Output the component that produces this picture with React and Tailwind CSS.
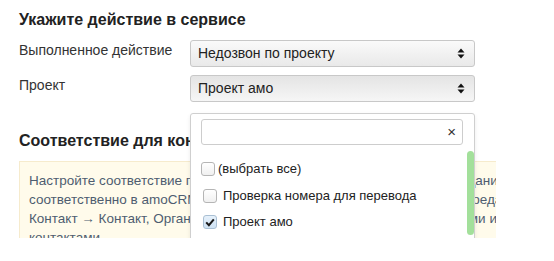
import React from "react";

const font = { fontFamily: '"Liberation Sans", Arial, sans-serif' };

function Arrows() {
  return (
    <svg width="8" height="11" viewBox="0 0 8 11" className="shrink-0">
      <path d="M4 0.5 L7.5 4.5 L0.5 4.5 Z" fill="#111" />
      <path d="M4 10.5 L7.5 6.5 L0.5 6.5 Z" fill="#111" />
    </svg>
  );
}

function Select({ value, active }) {
  return (
    <div
      className={
        "flex items-center justify-between h-[27px] pl-[7px] pr-[9px] border border-[#c8c8c8] rounded-[3px] text-[14px] text-[#222] " +
        (active
          ? "bg-gradient-to-b from-[#e4e4e4] to-[#f6f6f6]"
          : "bg-gradient-to-b from-[#fafafa] to-[#e9e9e9]")
      }
    >
      <span>{value}</span>
      <Arrows />
    </div>
  );
}

function Checkbox({ checked }) {
  return (
    <div
      className={
        "w-[14px] h-[14px] rounded-[3px] border flex items-center justify-center shrink-0 " +
        (checked
          ? "border-[#a9bfd3] bg-gradient-to-b from-[#e6f1fb] to-[#cfe2f3]"
          : "border-[#b5b5b5] bg-gradient-to-b from-white to-[#f0f0f0]")
      }
    >
      {checked && (
        <svg width="10" height="9" viewBox="0 0 10 9">
          <path d="M1.2 4.4 L3.9 7.2 L8.8 1.3" stroke="#1a1a1a" strokeWidth="2" fill="none" />
        </svg>
      )}
    </div>
  );
}

export default function App() {
  return (
    <div className="w-[554px] h-[261px] bg-white" style={font}>
      <div className="w-[496px] h-[238px] overflow-hidden pl-[19px] pt-[10px]">
        <h2 className="text-[16px] leading-[20px] font-bold text-[#222]">Укажите действие в сервисе</h2>

        <div className="flex mt-[10px]">
          <div className="w-[171px] text-[14px] leading-[20px] text-[#333]">Выполненное действие</div>
          <div className="w-[285px]">
            <Select value="Недозвон по проекту" />
          </div>
        </div>

        <div className="flex mt-[8px]">
          <div className="w-[171px] text-[14px] leading-[20px] text-[#333]">Проект</div>
          <div className="w-[285px] relative z-10">
            <Select value="Проект амо" active />
            <div className="absolute left-0 right-0 top-[38px] h-[150px] bg-white border border-[#cfcfcf] rounded-[3px] shadow-[0_2px_4px_rgba(0,0,0,0.08)]">
              <div className="pt-[5px] pl-[10px] pr-[11px]">
                <div className="h-[26px] border border-[#cdcdcd] rounded-[3px] flex items-center justify-end pr-[6px] text-[15px] text-[#333]">
                  ×
                </div>
              </div>
              <div className="relative">
                <div className="absolute right-0 top-[6px] w-[7px] h-[84px] rounded-full bg-[#a3e09b]" />
                <div className="pl-[10px] pt-[16px] text-[13px] text-[#222]">
                  <div className="flex items-center h-[16px] gap-[3px]">
                    <Checkbox />
                    <span>(выбрать все)</span>
                  </div>
                  <div className="flex items-center h-[16px] gap-[6px] pl-[2px] mt-[11px]">
                    <Checkbox />
                    <span>Проверка номера для перевода</span>
                  </div>
                  <div className="flex items-center h-[16px] gap-[6px] pl-[2px] mt-[10px]">
                    <Checkbox checked />
                    <span>Проект амо</span>
                  </div>
                </div>
              </div>
            </div>
          </div>
        </div>

        <h2 className="mt-[29px] text-[16px] leading-[20px] font-bold text-[#222]">Соответствие для контактов</h2>

        <div className="mt-[10px] w-[520px] bg-[#fffbeb] border border-[#f6ebcd] pl-[9px] pt-[9px] text-[13.5px] leading-[19px] text-[#4e5d70] whitespace-nowrap">
          <div>Настройте соответствие полей сервиса с полями amoCRM при их создании</div>
          <div>соответственно в amoCRM будут созданы нужные сущности для их передачи</div>
          <div>Контакт → Контакт, Организация → Компания, Сделка с его компаниями и</div>
          <div>контактами.</div>
        </div>
      </div>
    </div>
  );
}
